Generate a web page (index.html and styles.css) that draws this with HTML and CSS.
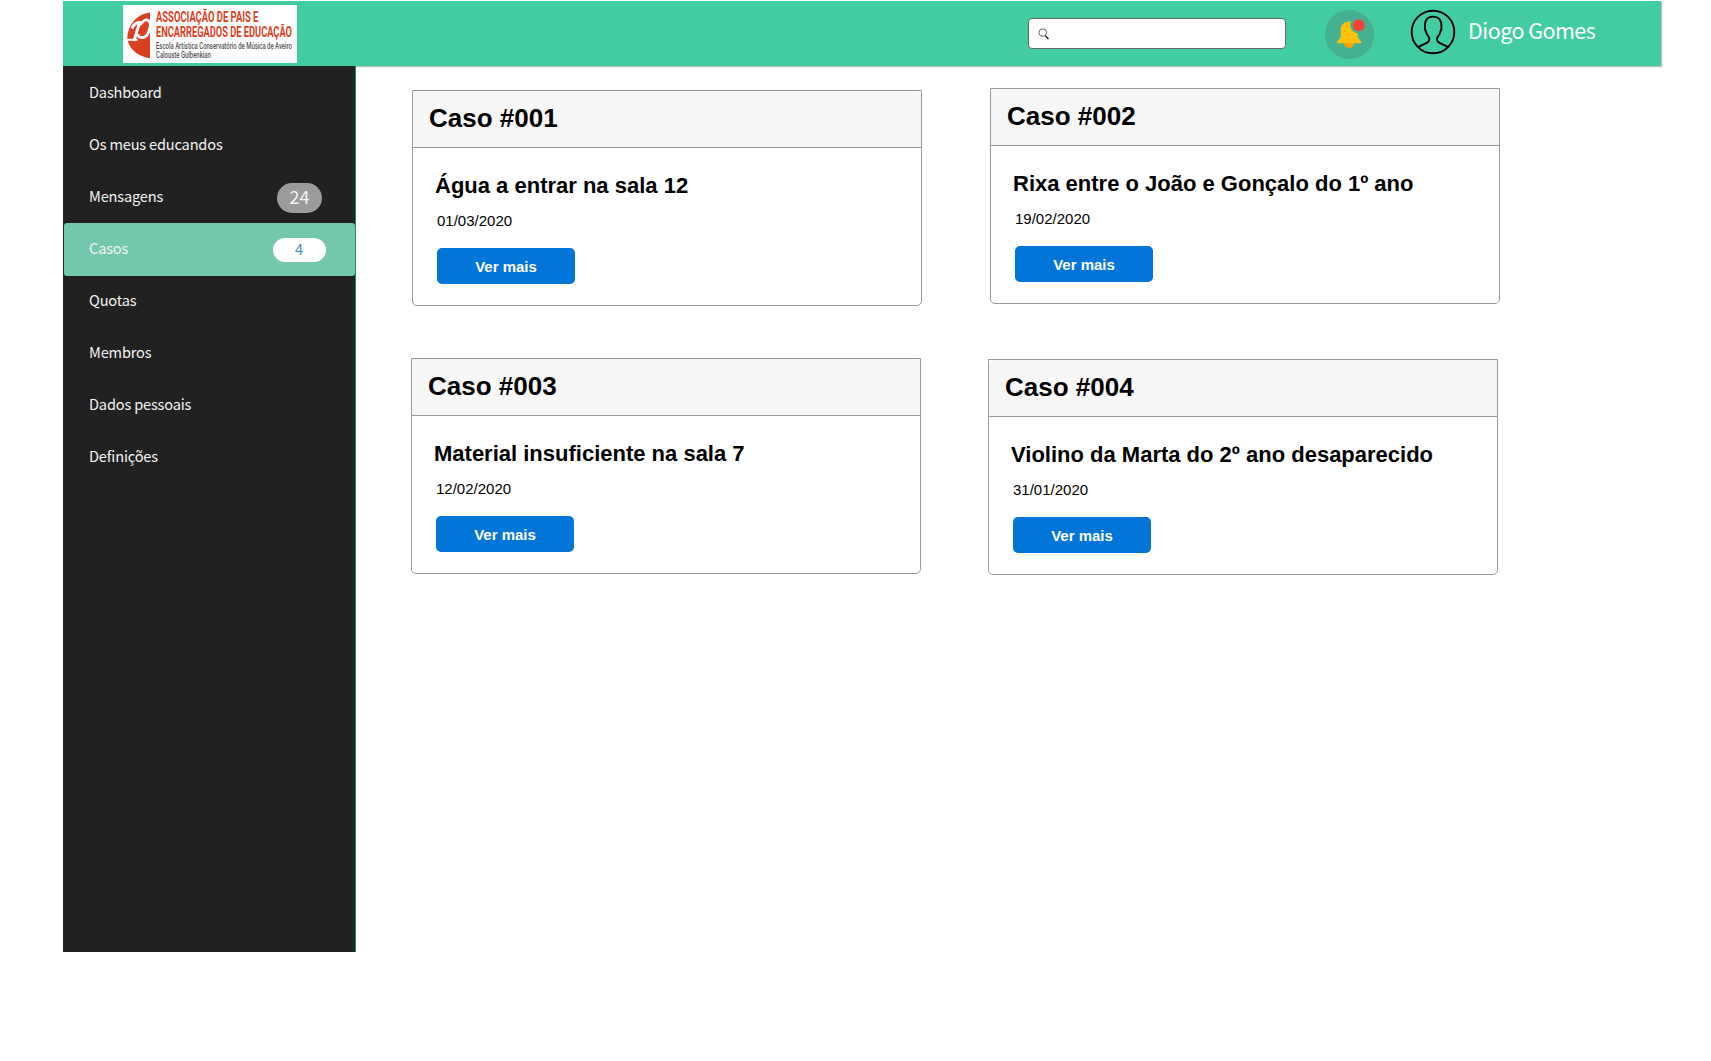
FILE: index.html
```html
<!DOCTYPE html>
<html lang="pt">
<head>
<meta charset="utf-8">
<title>Casos</title>
<link rel="stylesheet" href="styles.css">
</head>
<body>
<div class="app">
  <header class="topbar">
    <svg class="logo" width="174" height="58" viewBox="0 0 174 58">
      <rect width="174" height="58" fill="#fff"/>
      <path d="M27 7.500C14 9 4.500 20 4.300 33C5.500 43 13 51 27 53.300Z" fill="#d93f21"/>
      <g fill="none" stroke="#fff">
        <path d="M9 23.500C10.500 19.500 13 17.500 16.500 17.500L11 36" stroke-width="3"/>
        <path d="M4 34.800H14.500" stroke-width="2"/>
        <path d="M17 20C19.500 16.500 22 14.500 24.500 15C28 16.500 27.500 22 26 26C24.500 30.500 21.500 33 18 32.500C16 32 15 31 14.500 29.500" stroke-width="2.800"/>
      </g>
      <g class="logo-title" transform="translate(33 0) scale(.64 1)">
        <text x="0" y="17.500" textLength="160" lengthAdjust="spacingAndGlyphs">ASSOCIAÇÃO DE PAIS E</text>
        <text x="0" y="32.500" textLength="212.500" lengthAdjust="spacingAndGlyphs">ENCARREGADOS DE EDUCAÇÃO</text>
      </g>
      <g class="logo-sub" transform="translate(33 0) scale(.66 1)">
        <text x="0" y="43.700" textLength="206" lengthAdjust="spacingAndGlyphs">Escola Artística Conservatório de Música de Aveiro</text>
        <text x="0" y="53" textLength="83" lengthAdjust="spacingAndGlyphs">Calouste Gulbenkian</text>
      </g>
    </svg>
    <div class="search">
      <svg width="12" height="12" viewBox="0 0 12 12" fill="none">
        <circle cx="4.800" cy="4.600" r="3.800" stroke="#666" stroke-width="1"/>
        <path d="M7.200 7.600L10.500 11" stroke="#111" stroke-width="1.300"/>
      </svg>
    </div>
    <svg class="bell" width="50" height="50" viewBox="0 0 50 50">
      <circle cx="24.500" cy="24.500" r="24.500" fill="#46b191"/>
      <path d="M19 33a5 5 0 0 0 10 0z" fill="#ffa000"/>
      <path d="M24 11.500C19 11.500 15.700 15 15.700 20V26C15.700 29 12 30.500 12 32.300C12 33 12.500 33.300 13.300 33.300H35.100C35.900 33.300 36.400 33 36.400 32.300C36.400 30.500 32.700 29 32.700 26V23.500A8.500 8.500 0 0 1 26 11.600Z" fill="#ffc107"/>
      <circle cx="33.800" cy="15.300" r="7.600" fill="#46b191"/>
      <circle cx="33.800" cy="15.300" r="6" fill="#f44336"/>
    </svg>
    <svg class="avatar" width="46" height="46" viewBox="0 0 46 46" fill="none" stroke="#000" stroke-width="1.900" stroke-linejoin="round">
      <circle cx="23" cy="23" r="21.300"/>
      <path d="M8.500 38C12 35.800 16 35 18.300 32.800C19.800 31 19.300 28.500 18.500 27.500C17 26 16.200 24.500 16 22.500C14.600 21 14.700 19.500 15 18C14.500 11 17.500 7.600 23 7.600C28.500 7.600 31.900 11 31.400 18C31.600 19.500 31.700 21 30.400 22.500C30.200 24.500 29.300 26 28 27.500C27 28.500 26.500 31 28 32.800C30.300 35 34.300 35.800 37.800 38"/>
    </svg>
    <span class="user">Diogo Gomes</span>
  </header>
  <div class="body">
    <nav class="sidebar">
      <a class="item">Dashboard</a>
      <a class="item">Os meus educandos</a>
      <a class="item">Mensagens<span class="badge badge-grey">24</span></a>
      <a class="item active">Casos<span class="badge badge-white">4</span></a>
      <a class="item">Quotas</a>
      <a class="item">Membros</a>
      <a class="item">Dados pessoais</a>
      <a class="item">Definições</a>
    </nav>
    <main class="cases">
      <article class="card card-1">
        <h2 class="card-head">Caso #001</h2>
        <h3 class="card-title">Água a entrar na sala 12</h3>
        <p class="date">01/03/2020</p>
        <button class="more">Ver mais</button>
      </article>
      <article class="card card-2">
        <h2 class="card-head">Caso #002</h2>
        <h3 class="card-title">Rixa entre o João e Gonçalo do 1º ano</h3>
        <p class="date">19/02/2020</p>
        <button class="more">Ver mais</button>
      </article>
      <article class="card card-3">
        <h2 class="card-head">Caso #003</h2>
        <h3 class="card-title">Material insuficiente na sala 7</h3>
        <p class="date">12/02/2020</p>
        <button class="more">Ver mais</button>
      </article>
      <article class="card card-4">
        <h2 class="card-head">Caso #004</h2>
        <h3 class="card-title">Violino da Marta do 2º ano desaparecido</h3>
        <p class="date">31/01/2020</p>
        <button class="more">Ver mais</button>
      </article>
    </main>
  </div>
</div>
</body>
</html>
```
FILE: styles.css
```css
* { box-sizing: border-box; }
body { margin: 0; background: #fff; font-family: "Liberation Sans", Arial, sans-serif; color: #000; }
h2, h3, p { margin: 0; }
.app { width: 1598px; margin: 1px 0 0 63px; }

.topbar { display: flex; align-items: flex-start; height: 65px; padding-left: 60px; background: #41cca2; box-shadow: 1px 1px 1px rgba(0, 0, 0, .25); font-family: "Noto Sans CJK SC", sans-serif; }
.logo { margin-top: 4px; flex: none; overflow: visible; }
.logo-title { font: bold 14px Roboto, sans-serif; fill: #d93f21; }
.logo-sub { font: 500 8.300px Roboto, sans-serif; fill: #555; }
.search { display: flex; align-items: center; width: 258px; height: 31px; margin: 17px 0 0 731px; padding-left: 9px; border: 1px solid #666; border-radius: 4px; background: #fff; }
.bell { margin: 9px 0 0 39px; }
.avatar { margin: 8px 0 0 35px; }
.user { margin: 12px 0 0 12px; font-size: 21.500px; line-height: 34px; letter-spacing: -.53px; color: #fff; white-space: nowrap; }

.body { display: flex; align-items: flex-start; }
.sidebar { width: 293px; height: 886px; padding: 1px 0 0 1px; border-right: 1px solid #159256; background: #212121; font-family: "Noto Sans CJK SC", sans-serif; }
.item { display: flex; align-items: center; justify-content: space-between; height: 52px; padding: 0 29px 3px 25px; font-size: 14.600px; line-height: 22px; letter-spacing: -.18px; color: #f2f2f2; }
.active { height: 53px; margin: 0 0 -1px; border-radius: 3px; background: #72c7ad; }
.badge { display: flex; align-items: center; justify-content: center; letter-spacing: 0; }
.badge-grey { width: 45px; height: 30px; margin: 4px 4px 0 0; padding-bottom: 4px; border-radius: 15px; background: #9b9b9b; font-size: 18px; }
.badge-white { width: 53px; height: 24px; margin-top: 3px; padding: 0 1px 1px 0; border-radius: 12px; background: #fff; color: #428bca; }

.cases { display: grid; grid-template-columns: 578px 578px; grid-template-rows: 270px 270px; padding: 22px 0 0 55px; }
.card { width: 510px; height: 216px; border: 1px solid #999; border-radius: 0 0 5px 5px; }
.card-1 { margin: 2px 0 0 1px; }
.card-2 { margin: 0 0 0 1px; }
.card-4 { margin: 1px 0 0 -1px; }
.card-head { height: 57px; padding: 12px 0 0 16px; border-bottom: 1px solid #999; border-radius: 5px 5px 0 0; background: #f7f7f7; font-size: 26px; line-height: 30px; }
.card-title { padding: 25px 0 0 22px; font-size: 22px; line-height: 26px; white-space: nowrap; }
.date { padding: 13px 0 0 24px; font-size: 15px; line-height: 18px; }
.more { display: block; width: 138px; height: 36px; margin: 18px 0 0 24px; padding: 1px 0 0; border: 0; border-radius: 5px; background: #0275d8; color: #fff; font: bold 15px "Liberation Sans", Arial, sans-serif; }
```
